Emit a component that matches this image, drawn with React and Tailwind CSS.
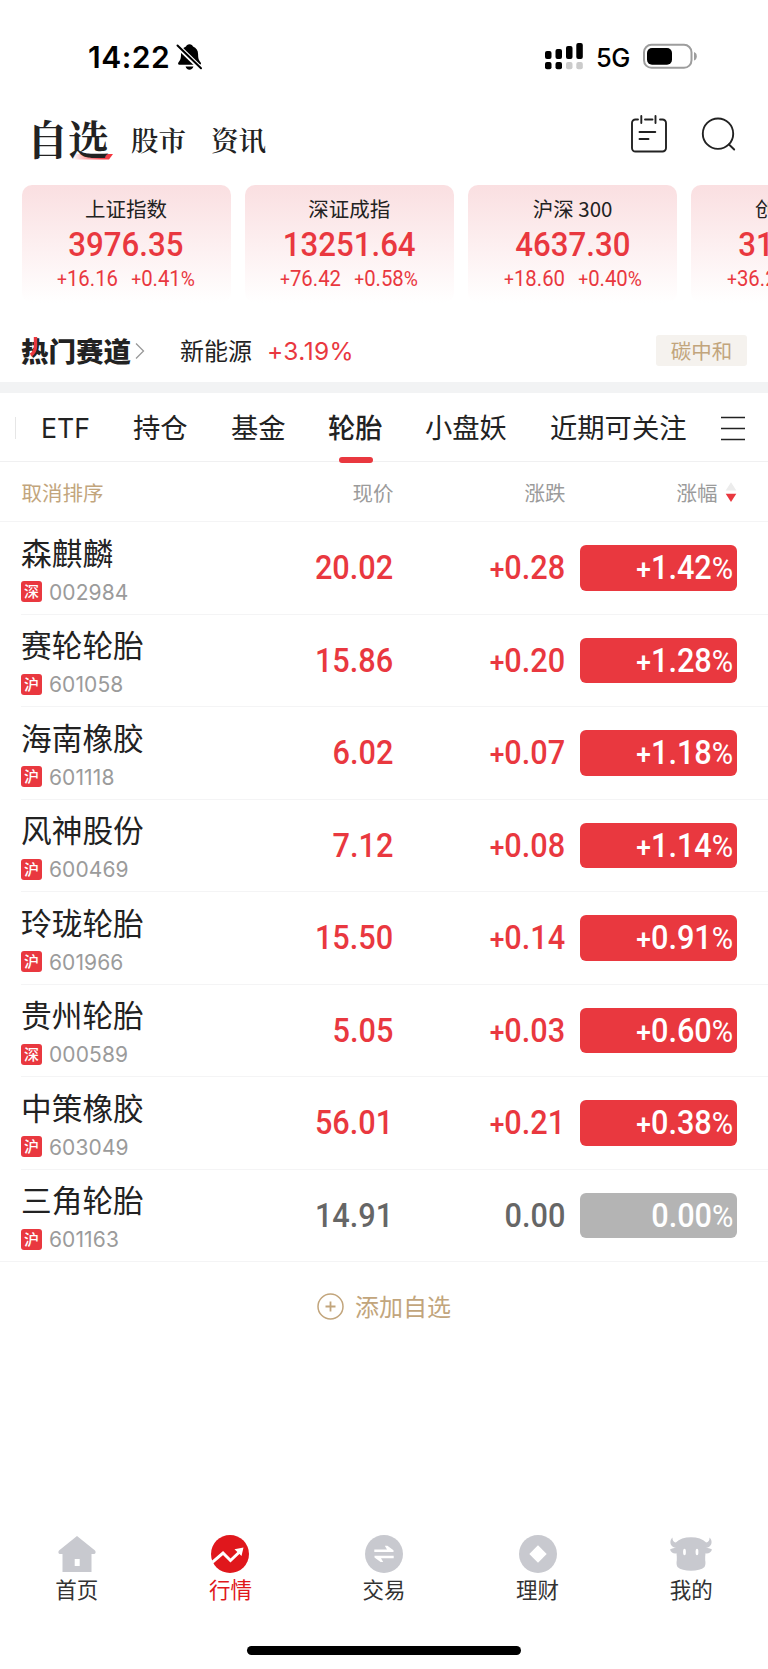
import React from "react";

const INDICES = [
  { name: "上证指数", value: "3976.35", diff: "+16.16", pct: "+0.41%" },
  { name: "深证成指", value: "13251.64", diff: "+76.42", pct: "+0.58%" },
  { name: "沪深 300", value: "4637.30", diff: "+18.60", pct: "+0.40%" },
  { name: "创业板指", value: "3172.35", diff: "+36.25", pct: "+1.16%" },
];

const STOCKS = [
  { name: "森麒麟", market: "深", code: "002984", price: "20.02", diff: "+0.28", pct: "+1.42%" },
  { name: "赛轮轮胎", market: "沪", code: "601058", price: "15.86", diff: "+0.20", pct: "+1.28%" },
  { name: "海南橡胶", market: "沪", code: "601118", price: "6.02", diff: "+0.07", pct: "+1.18%" },
  { name: "风神股份", market: "沪", code: "600469", price: "7.12", diff: "+0.08", pct: "+1.14%" },
  { name: "玲珑轮胎", market: "沪", code: "601966", price: "15.50", diff: "+0.14", pct: "+0.91%" },
  { name: "贵州轮胎", market: "深", code: "000589", price: "5.05", diff: "+0.03", pct: "+0.60%" },
  { name: "中策橡胶", market: "沪", code: "603049", price: "56.01", diff: "+0.21", pct: "+0.38%" },
  { name: "三角轮胎", market: "沪", code: "601163", price: "14.91", diff: "0.00", pct: "0.00%", flat: true },
];

// Figures with a reduced plus and percent sign
function Num({ text, className = "" }) {
  const plus = text.startsWith("+");
  const percent = text.endsWith("%");
  const digits = text.replace("+", "").replace("%", "");
  return (
    <span className={"inline-flex items-baseline font-['Roboto','Liberation_Sans',sans-serif] " + className}>
      {plus && <span className="text-[0.86em] leading-[0]">+</span>}
      <span>{digits}</span>
      {percent && <span className="text-[0.95em] leading-[0] font-normal">%</span>}
    </span>
  );
}

function StatusBar() {
  return (
    <div className="flex h-[106px] shrink-0 items-start pl-[88px] pt-[42px] font-['Inter',sans-serif] text-black">
      <span className="h-[30px] w-[88px] text-[30px] leading-[31px] font-semibold tracking-[0.500px]">14:22</span>
      <svg className="mt-[1px] h-[28px] w-[27px]" viewBox="0 0 27 28">
        <path d="M13.5 1.2c1.9 0 3.2 1 3.5 2.4 3.3 1.2 5.1 4 5.1 7.6 0 5 1 6.200 2.600 8.300.6.8.4 2.300-.9 2.300H3.300c-1.300 0-1.500-1.500-.9-2.300 1.600-2.100 2.600-3.300 2.600-8.300 0-3.600 1.700-6.400 5-7.600.3-1.400 1.600-2.400 3.500-2.400z" />
        <path d="M9.600 23.500h7.800c-.4 1.900-1.900 3.200-3.900 3.200s-3.500-1.300-3.900-3.200z" />
        <path d="M.8 2.200 25.800 26.500" stroke="#fff" strokeWidth="5" />
        <path d="M1.500 2.500 25 25.300" stroke="#000" strokeWidth="2" strokeLinecap="round" />
      </svg>
      <svg className="ml-[342px] mt-[1px] h-[27px] w-[38px]" viewBox="0 0 38 27">
        <rect x="0" y="8" width="6.500" height="8" rx="2" />
        <rect x="10.500" y="6" width="6.500" height="10" rx="2" />
        <rect x="21" y="3" width="6.500" height="13" rx="2" />
        <rect x="31.300" y="0" width="6.500" height="16" rx="2" />
        <rect x="0" y="19" width="6.500" height="7.300" rx="2" />
        <rect x="10.500" y="19" width="6.500" height="7.300" rx="2" />
        <rect x="21" y="19" width="6.500" height="7.300" rx="2" fill="#cbcbcb" />
        <rect x="31.300" y="19" width="6.500" height="7.300" rx="2" fill="#cbcbcb" />
      </svg>
      <span className="ml-[13px] w-[47px] text-[25.500px] leading-[31px] font-medium tracking-[-0.500px]">5G</span>
      <svg className="mt-[1px] h-[27px] w-[56px]" viewBox="0 0 56 27">
        <rect x="1" y="1.800" width="47.500" height="23" rx="7.500" fill="none" stroke="#9d9d9d" strokeWidth="2" />
        <rect x="4" y="5" width="25" height="16.700" rx="5" />
        <path d="M51 9c1.800.6 2.800 2.300 2.800 4.300S52.800 17 51 17.600z" fill="#9d9d9d" />
      </svg>
    </div>
  );
}

function Header() {
  return (
    <header className="flex h-[79px] shrink-0 items-start pl-[27px] text-[#222] font-['Noto_Serif_CJK_SC','Noto_Serif_SC','Noto_Sans_CJK_SC',serif]">
      <div className="relative w-[104px]">
        <svg className="absolute left-[46px] top-[48px] h-[6px] w-[41px]" viewBox="0 0 41 6">
          <defs>
            <linearGradient id="swoosh" x1="0" x2="1">
              <stop offset="0" stopColor="#f5333c" stopOpacity="0" />
              <stop offset="0.700" stopColor="#f5333c" stopOpacity="0.900" />
              <stop offset="1" stopColor="#f5333c" />
            </linearGradient>
          </defs>
          <path d="M2 0H40L36 5.500H0z" fill="url(#swoosh)" />
        </svg>
        <span className="relative block text-[41px] leading-[63px] font-bold">自选</span>
      </div>
      <span className="w-[80px] text-[27.500px] leading-[67px] font-semibold">股市</span>
      <span className="w-[419px] text-[27.500px] leading-[67px] font-semibold">资讯</span>
      <svg className="mt-[8px] h-[40px] w-[38px]" viewBox="0 0 38 40" fill="none" stroke="#222" strokeWidth="1.900" strokeLinecap="round">
        <path d="M8 5.500H5.500A3.500 3.500 0 0 0 2 9v25a3.500 3.500 0 0 0 3.500 3.500h27A3.500 3.500 0 0 0 36 34V9a3.500 3.500 0 0 0-3.500-3.500H30M15 5.500h7.500M11.300 2v7M25.500 2v7M9.500 18h15.800M9.500 25h9" />
      </svg>
      <svg className="ml-[33px] mt-[8px] h-[40px] w-[38px]" viewBox="0 0 38 40" fill="none" stroke="#222" strokeWidth="1.900" strokeLinecap="round">
        <circle cx="17" cy="19.700" r="15.200" />
        <path d="m28 30.500 5.200 5" />
      </svg>
    </header>
  );
}

function IndexCards() {
  return (
    <div className="flex h-[134px] shrink-0 gap-[14.300px] overflow-hidden pl-[21.500px]">
      {INDICES.map((it) => (
        <div
          key={it.name}
          className="flex h-[118px] w-[209px] shrink-0 flex-col items-center rounded-[10px] bg-linear-to-b from-[#fadfe1] to-white"
        >
          <span className="mt-[8px] text-[20.500px] leading-[30px] text-[#222]">{it.name}</span>
          <Num text={it.value} className="mt-[6px] scale-x-[0.945] text-[33px] leading-[32px] font-medium text-[#e9383f]" />
          <span className="mt-[5px] flex scale-x-[0.945] gap-[14px] text-[#e9383f]">
            <Num text={it.diff} className="text-[21.500px] leading-[26px]" />
            <Num text={it.pct} className="text-[21.500px] leading-[26px]" />
          </span>
        </div>
      ))}
    </div>
  );
}

function HotTrack() {
  return (
    <div className="flex h-[63px] shrink-0 items-start pl-[21px] pr-[21px] pt-[13px]">
      <span className="relative text-[27.500px] leading-[36px] font-black text-[#222]">
        热门赛道
        <svg className="absolute left-[8px] top-[5px] h-[20px] w-[10px]" viewBox="0 0 10 20">
          <path d="M6.500 0v9c0 4.500-1.500 7-4.800 9" fill="none" stroke="#e9383f" strokeWidth="3.400" />
        </svg>
      </span>
      <svg className="ml-[4px] mt-[10px] h-[18px] w-[10px]" viewBox="0 0 10 18">
        <path d="m1 1.500 7.500 7.500L1 16.500" fill="none" stroke="#999" strokeWidth="1.300" />
      </svg>
      <span className="ml-[35px] text-[24px] leading-[36px] text-[#222]">新能源</span>
      <span className="ml-[15px] font-['Inter',sans-serif] text-[24.500px] leading-[38px] tracking-[0.400px] text-[#e9383f]">+3.19%</span>
      <span className="ml-auto mt-[3px] flex h-[31px] w-[91px] items-center justify-center rounded-[3px] bg-[#f5f2ee] pb-[2px] text-[20.500px] leading-[30px] text-[#c2a57c]">
        碳中和
      </span>
    </div>
  );
}

function Tabs() {
  const tab = "h-[68px] shrink-0 leading-[66px]";
  return (
    <nav className="flex h-[69px] shrink-0 items-start border-b border-[#f0f0f1] text-[27.300px] text-[#222]">
      <span className="ml-[15px] mt-[24px] h-[22px] w-px bg-[#e6e6e6]" />
      <span className="ml-[25px] h-[68px] w-[92px] shrink-0 font-['Inter',sans-serif] text-[26.700px] leading-[70px]">ETF</span>
      <span className={tab + " w-[98px]"}>持仓</span>
      <span className={tab + " w-[97px]"}>基金</span>
      <span className={tab + " relative w-[97px] font-medium"}>
        轮胎
        <span className="absolute left-[10.500px] top-[64px] h-[6px] w-[34.500px] rounded-full bg-[#e9383f]" />
      </span>
      <span className={tab + " w-[125px]"}>小盘妖</span>
      <span className={tab + " w-[171px]"}>近期可关注</span>
      <svg className="mt-[22px] h-[26px] w-[24px]" viewBox="0 0 24 26">
        <path d="M0 2.500h24M0 13.500h24M0 24.500h24" stroke="#222" strokeWidth="1.700" />
      </svg>
    </nav>
  );
}

function TableHead() {
  return (
    <div className="flex h-[60px] shrink-0 items-center border-b border-[#f4f4f5] pl-[21.500px] text-[20.500px] leading-[60px] text-[#9b9b9b]">
      <span className="w-[170px] text-[#c2a57c]">取消排序</span>
      <span className="w-[202px] text-right">现价</span>
      <span className="w-[172px] text-right">涨跌</span>
      <span className="w-[152px] text-right">涨幅</span>
      <svg className="ml-[7px] h-[22px] w-[12px]" viewBox="0 0 12 22">
        <path d="m6 1.200 5.300 8.300H.7z" fill="#ececec" />
        <path d="m6 21 5.300-8.300H.7z" fill="#e9383f" />
      </svg>
    </div>
  );
}

function StockRow({ stock, last }) {
  const tone = stock.flat ? "text-[#666]" : "text-[#e9383f]";
  const figure = "mt-[1px] origin-right scale-x-[0.93] text-[33px] leading-[46px] font-medium";
  return (
    <div className={"flex h-[92.500px] shrink-0 items-center border-b border-[#f4f4f5] " + (last ? "pl-[21px]" : "ml-[21px]")}>
      <div className="flex w-[170px] flex-col">
        <span className="text-[30.700px] leading-[40px] text-[#222]">{stock.name}</span>
        <span className="mt-[8px] flex items-center">
          <span className="flex h-[21px] w-[21px] items-center justify-center rounded-[3px] bg-[#e9383f] pb-px text-[15px] leading-[20px] font-medium text-white">
            {stock.market}
          </span>
          <span className="ml-[7px] pt-[2px] font-['Inter',sans-serif] text-[21px] leading-[22px] tracking-[0.100px] text-[#9b9b9b]">
            {stock.code}
          </span>
        </span>
      </div>
      <div className={"flex w-[202px] justify-end " + tone}>
        <Num text={stock.price} className={figure} />
      </div>
      <div className={"flex w-[172px] justify-end " + tone}>
        <Num text={stock.diff} className={figure} />
      </div>
      <div
        className={
          "ml-[14.500px] flex h-[45.500px] w-[157.500px] items-center justify-end rounded-[6px] pr-[4px] text-white " +
          (stock.flat ? "bg-[#b4b4b4]" : "bg-[#e9383f]")
        }
      >
        <Num text={stock.pct} className={figure} />
      </div>
    </div>
  );
}

const ICONS = {
  home: (
    <svg className="h-[40px] w-[40px]" viewBox="0 0 40 40" fill="#c8c9cf">
      <path fillRule="evenodd" d="M20 2 38 16.500c1 .9.800 3.500-.7 3.500H34.500v18h-29V20H2.700C1.200 20 1 17.400 2 16.500zM17.700 25v7h5v-7z" />
    </svg>
  ),
  market: (
    <svg className="h-[40px] w-[40px]" viewBox="0 0 40 40">
      <circle cx="20" cy="20" r="19" fill="#e0171c" />
      <path d="M2.500 28.200 13 19l7.500 7.500L30.500 17" fill="none" stroke="#fff" strokeWidth="3" />
      <path d="m24.500 15.200 9-1.700-2 8.500z" fill="#fff" />
    </svg>
  ),
  trade: (
    <svg className="h-[40px] w-[40px]" viewBox="0 0 40 40">
      <circle cx="20" cy="20" r="19" fill="#c8c9cf" />
      <path d="M10.300 15.400H23L20.800 11.800h2.600L29.500 16.300v1.700H10.300zM29.700 24.300H17L19.200 27.900h-2.600L10.500 23.400v-1.700H29.700z" fill="#fff" />
    </svg>
  ),
  wealth: (
    <svg className="h-[40px] w-[40px]" viewBox="0 0 40 40">
      <circle cx="20" cy="20" r="19" fill="#c8c9cf" />
      <path d="m20 11.300 8.700 8.700-8.700 8.700-8.700-8.700z" fill="#fff" />
    </svg>
  ),
  mine: (
    <svg className="h-[40px] w-[44px]" viewBox="0 0 44 40" fill="#c8c9cf">
      <path d="M3.500 3.500C.9 6 .5 10 3.500 12.500c1 .9 2.300 1.300 3.500 1.500-1.800.1-4 .4-6 1.500 1 3.300 4 4.500 6.500 3.800.3 2.500.4 4.700.3 7-.5 2.500-.3 5 .7 6.700 2.800 2.500 7.500 3.800 13.500 3.800s10.700-1.300 13.500-3.800c1-1.700 1.200-4.200.7-6.700-.1-2.300 0-4.500.3-7 2.500.7 5.500-.5 6.500-3.800-2-1.100-4.200-1.400-6-1.500 1.200-.2 2.500-.6 3.500-1.500 3-2.500 2.600-6.500 0-9 .2 2.700-.8 4.500-3.300 5C33.800 5 28.500 3.200 22 3.200S10.200 5 6.800 8.500C4.300 8 3.300 6.200 3.500 3.500z" />
      <ellipse cx="15.500" cy="18" rx="1.400" ry="3.200" fill="#fff" />
      <ellipse cx="28" cy="18" rx="1.400" ry="3.200" fill="#fff" />
    </svg>
  ),
};

const NAV = [
  { label: "首页", icon: "home" },
  { label: "行情", icon: "market", active: true },
  { label: "交易", icon: "trade" },
  { label: "理财", icon: "wealth" },
  { label: "我的", icon: "mine" },
];

export default function App() {
  return (
    <div className="flex h-[1669px] w-[768px] flex-col overflow-hidden bg-white font-['Noto_Sans_CJK_SC',sans-serif]">
      <StatusBar />
      <Header />
      <IndexCards />
      <HotTrack />
      <div className="h-[11px] shrink-0 bg-[#f2f3f4]" />
      <Tabs />
      <TableHead />
      <div className="flex shrink-0 flex-col">
        {STOCKS.map((s, i) => (
          <StockRow key={s.code} stock={s} last={i === STOCKS.length - 1} />
        ))}
      </div>
      <button className="mt-[26px] flex h-[36px] shrink-0 items-center justify-center gap-[11px] text-[24px] leading-[36px] text-[#c2a57c]">
        <svg className="h-[27px] w-[27px]" viewBox="0 0 27 27" fill="none" stroke="#c2a57c" strokeWidth="1.500">
          <circle cx="13.500" cy="13.500" r="12.500" />
          <path d="M13.500 8.500v10M8.500 13.500h10" strokeWidth="1.800" />
        </svg>
        添加自选
      </button>
      <div className="mt-auto flex h-[112px] shrink-0">
        {NAV.map((n) => (
          <div key={n.label} className="flex flex-1 flex-col items-center">
            {ICONS[n.icon]}
            <span className={"text-[21.500px] leading-[30px] " + (n.active ? "text-[#e0171c]" : "text-[#333]")}>{n.label}</span>
          </div>
        ))}
      </div>
      <div className="mx-auto mb-[14px] h-[9px] w-[274px] shrink-0 rounded-full bg-black" />
    </div>
  );
}
